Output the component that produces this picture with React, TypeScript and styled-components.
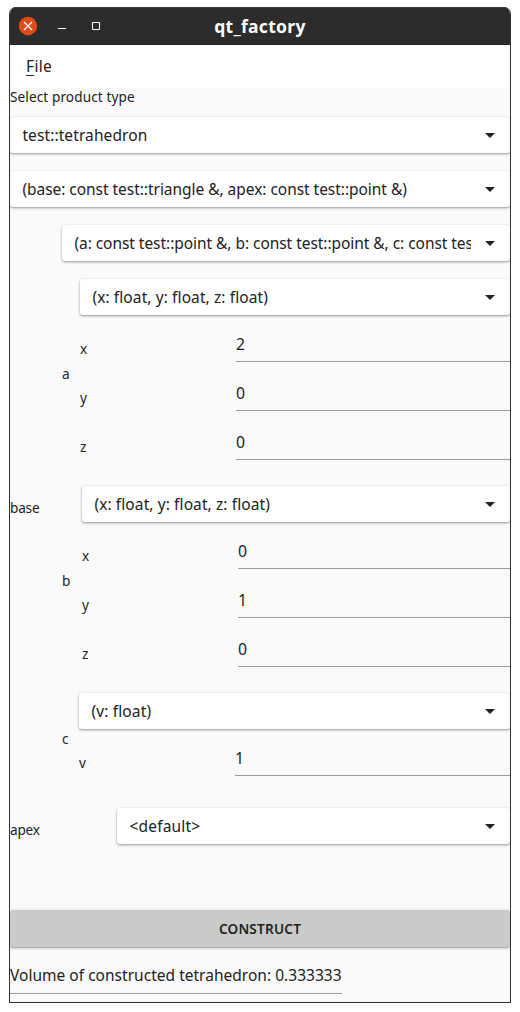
import React from "react";
import styled, { createGlobalStyle } from "styled-components";

const GlobalStyle = createGlobalStyle`
  html, body { margin: 0; background: #fff; }
  body { font-family: "Noto Sans", "Open Sans", sans-serif; color: #222; }
  * { box-sizing: border-box; }
`;

const Window = styled.div`
  width: 502px;
  height: 996px;
  margin: 7px 0 0 9px;
  display: flex;
  flex-direction: column;
  border: 1px solid #303030;
  border-top: 0;
  border-radius: 7px 7px 0 0;
  overflow: hidden;
  background: #fafafa;
`;

const TitleBar = styled.header`
  flex: none;
  height: 38px;
  margin: 0 -1px;
  padding: 0 10px;
  display: grid;
  grid-template-columns: 100px 1fr 100px;
  align-items: center;
  background: #2c2c2c;
  border-top: 1px solid #3b3b3b;
  border-bottom: 1px solid #222;
`;

const WindowButtons = styled.svg`
  display: block;
`;

const Title = styled.h1`
  margin: 0;
  text-align: center;
  font-size: 17.5px;
  line-height: 24px;
  color: #fff;
`;

const Text = styled.span<{ $track?: number }>`
  letter-spacing: ${(p) => p.$track ?? 0}px;
  white-space: nowrap;
`;

const MenuBar = styled.nav`
  flex: none;
  height: 43px;
  padding: 10px 16px;
  background: #fff;
  font-size: 15.5px;
  line-height: 22px;
`;

const Mnemonic = styled.span`
  display: inline-block;
  height: 21px;
  border-bottom: 1px solid #222;
`;

const Content = styled.main`
  flex: 1;
  display: flex;
  flex-direction: column;
  padding-bottom: 8px;
`;

const Caption = styled.div`
  height: 29px;
  font-size: 13.6px;
  line-height: 18px;
`;

const Stack = styled.div<{ $gap: number }>`
  flex: 1;
  min-width: 0;
  display: flex;
  flex-direction: column;
  gap: ${(p) => p.$gap}px;
`;

const SelectBox = styled.div`
  flex: none;
  height: 36px;
  padding: 0 15px 0 12.4px;
  display: flex;
  align-items: center;
  gap: 14px;
  background: #fff;
  border-radius: 3px;
  box-shadow: 0 1px 3px rgba(0, 0, 0, 0.28), 0 1px 2px rgba(0, 0, 0, 0.16);
  font-size: 15.5px;
  line-height: 36px;
`;

const SelectValue = styled.div`
  flex: 1;
  min-width: 0;
  overflow: hidden;
`;

const Branch = styled.section<{ $label: number; $top?: number }>`
  display: grid;
  grid-template-columns: ${(p) => p.$label}px minmax(0, 1fr);
  align-items: center;
  margin-top: ${(p) => p.$top ?? 0}px;
`;

const Label = styled.label<{ $drop?: number }>`
  padding-top: ${(p) => p.$drop ?? 0}px;
  font-size: 13.6px;
  line-height: 18px;
  letter-spacing: -0.2px;
`;

const FieldRow = styled.div`
  height: 32px;
  display: grid;
  grid-template-columns: 156px minmax(0, 1fr);
`;

const FieldInput = styled.div`
  border-bottom: 1px solid #9c9d9c;
  font-size: 15.8px;
  line-height: 29px;
`;

const ConstructButton = styled.button`
  flex: none;
  height: 37px;
  margin: 66px 0 0;
  padding: 0;
  border: 0;
  border-radius: 3px;
  background: #c9cbc9;
  box-shadow: 0 1px 3px rgba(0, 0, 0, 0.3), 0 1px 1px rgba(0, 0, 0, 0.14);
  font: 600 13.6px/37px "Noto Sans", "Open Sans", sans-serif;
  color: #222;
`;

const Result = styled.output`
  width: 332px;
  height: 32px;
  margin-top: 15px;
  border-bottom: 1px solid #9c9d9c;
  font-size: 15.5px;
  line-height: 27px;
`;

function Select({ value, track }: { value: string; track?: number }) {
  return (
    <SelectBox>
      <SelectValue><Text $track={track}>{value}</Text></SelectValue>
      <svg width="10" height="5" viewBox="0 0 10 5"><path d="M0 0h10L5 5z" fill="#222" /></svg>
    </SelectBox>
  );
}

function Constructor({ signature, track, fields }: { signature: string; track?: number; fields: [string, string][] }) {
  return (
    <Stack $gap={15}>
      <Select value={signature} track={track} />
      <Stack $gap={17}>
        {fields.map(([name, value]) => (
          <FieldRow key={name}>
            <Label $drop={10}>{name}</Label>
            <FieldInput>{value}</FieldInput>
          </FieldRow>
        ))}
      </Stack>
    </Stack>
  );
}

export default function App() {
  return (
    <>
      <GlobalStyle />
      <Window>
        <TitleBar>
          <WindowButtons width="96" height="20" viewBox="0 0 96 20">
            <circle cx="9" cy="10" r="9.2" fill="#e24a17" />
            <path d="M5 6l8 8M13 6l-8 8" stroke="#fff" strokeWidth="1.3" />
            <path d="M39 12.5h8" stroke="#fff" />
            <path d="M73.5 6.5h7v7h-7z" fill="none" stroke="#fff" />
          </WindowButtons>
          <Title><Text $track={0.3}>qt_factory</Text></Title>
        </TitleBar>
        <MenuBar><Text $track={0.35}><Mnemonic>F</Mnemonic>ile</Text></MenuBar>
        <Content>
          <Caption><Text $track={0.1}>Select product type</Text></Caption>
          <Stack $gap={18}>
            <Select value="test::tetrahedron" track={0.1} />
            <Select value="(base: const test::triangle &, apex: const test::point &)" track={-0.04} />
            <Branch $label={52}>
              <Label $drop={14}>base</Label>
              <Stack $gap={18}>
                <Select value="(a: const test::point &, b: const test::point &, c: const test::point &)" track={-0.05} />
                <Stack $gap={26}>
                  <Branch $label={18}>
                    <Label $drop={8}>a</Label>
                    <Constructor signature="(x: float, y: float, z: float)" track={0.1} fields={[["x", "2"], ["y", "0"], ["z", "0"]]} />
                  </Branch>
                  <Branch $label={20}>
                    <Label $drop={8}>b</Label>
                    <Constructor signature="(x: float, y: float, z: float)" track={0.1} fields={[["x", "0"], ["y", "1"], ["z", "0"]]} />
                  </Branch>
                  <Branch $label={17}>
                    <Label $drop={8}>c</Label>
                    <Constructor signature="(v: float)" track={0.15} fields={[["v", "1"]]} />
                  </Branch>
                </Stack>
              </Stack>
            </Branch>
            <Branch $label={107} $top={14}>
              <Label $drop={8}>apex</Label>
              <Select value="<default>" track={0.2} />
            </Branch>
          </Stack>
          <ConstructButton><Text $track={0.2}>CONSTRUCT</Text></ConstructButton>
          <Result><Text $track={0.02}>Volume of constructed tetrahedron: 0.333333</Text></Result>
        </Content>
      </Window>
    </>
  );
}
